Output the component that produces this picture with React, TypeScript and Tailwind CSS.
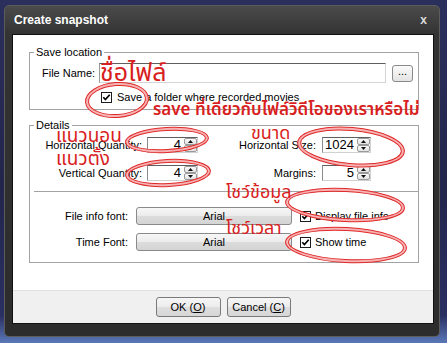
import React from "react";

const UI = "font-['Liberation_Sans',Arial,sans-serif]";
const TH = "font-['Noto_Sans_Thai','Noto_Serif_Thai','Loma','Garuda','Tlwg_Typo','Noto_Sans',sans-serif]";

function Check() {
  return (
    <svg width="11" height="11" viewBox="0 0 11 11" className="shrink-0">
      <rect x="0.5" y="0.5" width="10" height="10" fill="#fff" stroke="#1c1c1c" />
      <path d="M2.3 5.3 L4.4 7.6 L8.7 2.8" stroke="#000" strokeWidth="1.7" fill="none" />
    </svg>
  );
}

function SpinHalf({ up }: { up?: boolean }) {
  return (
    <div className="flex-1 flex items-center justify-center border border-[#9a9a9a] rounded-[2px] bg-[linear-gradient(#fbfbfb,#e2e2e2)]">
      <svg width="5" height="3" viewBox="0 0 5 3">
        {up ? <path d="M0 3 L2.5 0 L5 3 Z" fill="#111" /> : <path d="M0 0 L2.5 3 L5 0 Z" fill="#111" />}
      </svg>
    </div>
  );
}

function Spin({ v, wide }: { v: string; wide?: boolean }) {
  return (
    <div
      className={
        (wide ? "w-[51px] " : "w-[49px] ") +
        "h-[16px] flex bg-white border border-t-[#5f5f5f] border-l-[#8c8c8c] border-r-[#d0d0d0] border-b-[#d0d0d0]"
      }
    >
      <div className="flex-1 text-right pr-[3px] text-[13px] leading-[14px] text-black">{v}</div>
      <div className="w-[13px] flex flex-col">
        <SpinHalf up />
        <SpinHalf />
      </div>
    </div>
  );
}

function FontBtn() {
  return (
    <div className="w-[156px] h-[18px] rounded-[3px] border border-[#8a8a8a] bg-[linear-gradient(#f7f7f7,#ebebeb_50%,#dcdcdc_51%,#d4d4d4)] flex items-center justify-center text-[11px] leading-none">
      Arial
    </div>
  );
}

function Ell({ cx, cy, rx, ry, rot = 0 }: { cx: number; cy: number; rx: number; ry: number; rot?: number }) {
  return (
    <g transform={`rotate(${rot} ${cx} ${cy})`}>
      <ellipse cx={cx} cy={cy} rx={rx} ry={ry} fill="none" stroke="#f6b3b3" strokeWidth="3" />
      <ellipse cx={cx} cy={cy} rx={rx + 1.5} ry={ry + 1.5} fill="none" stroke="#e02a2a" strokeWidth="1" />
      <ellipse cx={cx} cy={cy} rx={rx - 1.5} ry={ry - 1.5} fill="none" stroke="#e02a2a" strokeWidth="1" />
    </g>
  );
}

export default function App() {
  return (
    <div
      className={
        UI +
        " relative w-[447px] h-[343px] overflow-hidden pt-[5px] pl-[4px] bg-[linear-gradient(180deg,#2b2f5c_0%,#22264c_55%,#2a2f62_92%,#5a78b8_100%)]"
      }
    >
      <div className="w-[436px] h-[332px] rounded-[5px] border border-[#5c5c5c] bg-[linear-gradient(#4b4b4b,#333333_28px,#2c2c2c)] flex flex-col pl-[7px] pr-[5px] pb-[12px]">
        <div className="h-[28px] flex items-center justify-between pl-[2px] pr-[7px]">
          <span className="text-white font-bold text-[12px] leading-none">Create snapshot</span>
          <span className="text-[#dcdcdc] font-bold text-[12px] leading-none">x</span>
        </div>
        <div className="flex-1 border border-[#101010] bg-white flex flex-col text-[11px] text-black">
          <div className="flex-1 pt-[11px] pl-[16px]">
            <fieldset className="w-[390px] border border-[#a3a3a3] pb-[5px]">
              <legend className="ml-[4px] px-[2px] text-[11px] leading-[13px]">Save location</legend>
              <div className="mt-[4px] flex items-center pl-[12px]">
                <span className="w-[57px]">File Name:</span>
                <div className="w-[287px] h-[20px] border border-t-[#5f5f5f] border-l-[#9a9a9a] border-r-[#d4d4d4] border-b-[#d4d4d4] bg-white" />
                <div className="ml-[6px] w-[21px] h-[17px] rounded-[3px] border border-[#8a8a8a] bg-[linear-gradient(#fafafa,#e4e4e4)] flex items-center justify-center text-[11px] leading-none pb-[3px]">
                  ...
                </div>
              </div>
              <div className="mt-[7px] h-[14px] flex items-center pl-[71px] gap-[5px]">
                <Check />
                <span>Save a folder where recorded movies</span>
              </div>
            </fieldset>
            <fieldset className="mt-[9px] w-[390px] border border-[#a3a3a3] pb-[11px]">
              <legend className="ml-[4px] px-[2px] text-[11px] leading-[13px]">Details</legend>
              <div className="mt-[5px] flex items-center">
                <span className="w-[112px] text-right">Horizontal Quantity:</span>
                <div className="ml-[5px]">
                  <Spin v="4" wide />
                </div>
                <span className="w-[118px] text-right">Horizontal Size:</span>
                <div className="ml-[6px]">
                  <Spin v="1024" />
                </div>
              </div>
              <div className="mt-[11px] flex items-center">
                <span className="w-[112px] text-right">Vertical Quantity:</span>
                <div className="ml-[5px]">
                  <Spin v="4" wide />
                </div>
                <span className="w-[118px] text-right">Margins:</span>
                <div className="ml-[6px]">
                  <Spin v="5" />
                </div>
              </div>
              <div className="mt-[10px] ml-[4px] h-px bg-[#a3a3a3]" />
              <div className="mt-[15px] flex items-center">
                <span className="w-[98px] text-right">File info font:</span>
                <div className="ml-[8px]">
                  <FontBtn />
                </div>
                <div className="ml-[8px] flex items-center gap-[4px]">
                  <Check />
                  <span>Display file info</span>
                </div>
              </div>
              <div className="mt-[8px] flex items-center">
                <span className="w-[98px] text-right">Time Font:</span>
                <div className="ml-[8px]">
                  <FontBtn />
                </div>
                <div className="ml-[8px] flex items-center gap-[4px]">
                  <Check />
                  <span>Show time</span>
                </div>
              </div>
            </fieldset>
          </div>
          <div className="h-[33px] border-t border-[#dfdfdf] bg-[#f0f0f0] flex justify-center gap-[6px] pt-[6px]">
            <div className="w-[65px] h-[20px] rounded-[3px] border border-[#7a7a7a] bg-[linear-gradient(#f6f6f6,#ececec_50%,#dedede_51%,#d6d6d6)] flex items-center justify-center text-[11px] leading-none">
              OK (<span className="underline">O</span>)
            </div>
            <div className="w-[64px] h-[20px] rounded-[3px] border border-[#7a7a7a] bg-[linear-gradient(#f6f6f6,#ececec_50%,#dedede_51%,#d6d6d6)] flex items-center justify-center text-[11px] leading-none">
              Cancel (<span className="underline">C</span>)
            </div>
          </div>
        </div>
      </div>

      <svg className="absolute left-0 top-0 pointer-events-none" width="447" height="343" viewBox="0 0 447 343">
        <Ell cx={117} cy={100} rx={30} ry={16} rot={-4} />
        <Ell cx={167} cy={140} rx={40} ry={11} rot={-3} />
        <Ell cx={168} cy={173} rx={41} ry={12} rot={-3} />
        <Ell cx={351} cy={147} rx={52} ry={18} rot={5} />
        <Ell cx={345} cy={205} rx={58} ry={15} rot={3} />
        <Ell cx={346} cy={245} rx={59} ry={16} rot={3} />
      </svg>

      <span className={TH + " absolute left-[100px] top-[61px] text-[25px] leading-none text-[#d81e1e]"}>ชื่อไฟล์</span>
      <span className={TH + " absolute left-[153px] top-[102px] text-[17px] leading-none font-semibold text-[#d81e1e] whitespace-nowrap"}>
        save ที่เดียวกับไฟล์วิดีโอของเราหรือไม่
      </span>
      <span className={TH + " absolute left-[56px] top-[127px] text-[19px] leading-none text-[#d81e1e]"}>แนวนอน</span>
      <span className={TH + " absolute left-[56px] top-[150px] text-[19px] leading-none text-[#d81e1e]"}>แนวตั้ง</span>
      <span className={TH + " absolute left-[251px] top-[125px] text-[18px] leading-none text-[#d81e1e]"}>ขนาด</span>
      <span className={TH + " absolute left-[226px] top-[184px] text-[18px] leading-none text-[#d81e1e]"}>โชว์ข้อมูล</span>
      <span className={TH + " absolute left-[226px] top-[220px] text-[18px] leading-none text-[#d81e1e]"}>โชว์เวลา</span>
    </div>
  );
}
